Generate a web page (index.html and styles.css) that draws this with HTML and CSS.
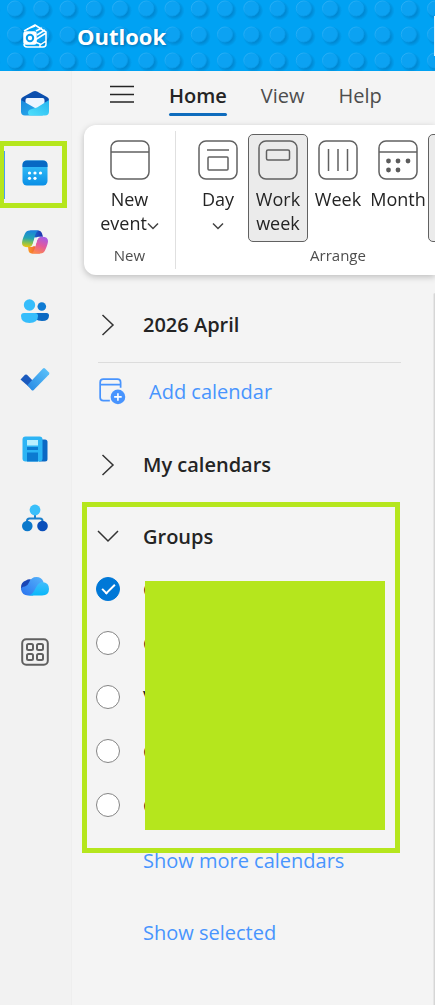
FILE: index.html
```html
<!DOCTYPE html>
<html lang="en">
<head>
  <meta charset="UTF-8">
  <meta name="viewport" content="width=device-width, initial-scale=1.0">
  <title>Calendar - Outlook</title>
  <link rel="stylesheet" href="styles.css">
</head>
<body>

<!-- Top bar -->
<header class="topbar">
  <svg class="topbar-pattern" aria-hidden="true">
    <defs>
      <linearGradient id="studEdge" x1="0" y1="0" x2="1" y2="1">
        <stop offset="0" stop-color="#35b4f7"/>
        <stop offset=".5" stop-color="#0fa2f1"/>
        <stop offset="1" stop-color="#0595e2"/>
      </linearGradient>
      <radialGradient id="studShadow">
        <stop offset=".6" stop-color="#0077bd" stop-opacity=".6"/>
        <stop offset="1" stop-color="#0077bd" stop-opacity="0"/>
      </radialGradient>
      <g id="stud">
        <circle cx="2" cy="2" r="10" fill="url(#studShadow)"/>
        <circle r="7.5" fill="#0ca2f2" stroke="url(#studEdge)"/>
      </g>
      <pattern id="studs" width="105" height="26" patternUnits="userSpaceOnUse" x="2" y="-4">
        <use href="#stud" x="13" y="12.5"/>
        <use href="#stud" x="39.3" y="12.5"/>
        <use href="#stud" x="65.5" y="12.5"/>
        <use href="#stud" x="91.8" y="12.5"/>
      </pattern>
    </defs>
    <rect width="100%" height="100%" fill="url(#studs)"/>
  </svg>
  <svg class="logo" viewBox="0 0 26 26" fill="none" stroke="#fff" stroke-width="1.5" stroke-linejoin="round" aria-hidden="true">
    <path d="M2 8 L13 2 L24 9 V21 Q24 24 21 24 H5 Q2 24 2 21 M14 8 L20 5 M15 12 L23 7 M13 17 L24 10 M13 19 L18 21 V24 M5 6 L13 3 M18 22 L24 18"/>
    <rect x="2" y="9" width="12" height="12" rx="2" fill="#fff"/>
    <circle cx="8" cy="15" r="3.2" stroke="#079bea" stroke-width="2"/>
  </svg>
  <span class="brand">Outlook</span>
  <input class="search" type="search" aria-label="Search">
</header>

<div class="app">
  <!-- App rail -->
  <nav class="rail" aria-label="Apps">
    <a href="#" class="rail-item" aria-label="Mail">
      <svg viewBox="0 0 28 28">
        <defs>
          <linearGradient id="mailL" x1="0" y1="0" x2="1" y2="1"><stop stop-color="#1b88dc"/><stop offset="1" stop-color="#2ab2ef"/></linearGradient>
          <linearGradient id="mailR" x1="0" y1="1" x2="1" y2="0"><stop stop-color="#4fe1fc"/><stop offset="1" stop-color="#27b4ef"/></linearGradient>
        </defs>
        <path d="M0 10 Q0 8 2 7 L12 1.400 Q14 .4 16 1.400 L26 7 Q28 8 28 10 V17 H0Z" fill="#0b4fae"/>
        <path d="M4.500 10 Q4.500 8 6.500 8 H21.500 Q23.500 8 23.500 10 V20 H4.500Z" fill="#edf5ff"/>
        <path d="M0 10 L14 18 L22 25.500 H4 Q0 25.500 0 21.500Z" fill="url(#mailL)"/>
        <path d="M28 10 V21.500 Q28 25.500 24 25.500 H10 Q7 25.500 7 22.500 Q7 20 10 19.200 L16 17.500Z" fill="url(#mailR)"/>
      </svg>
    </a>
    <a href="#" class="rail-item active" aria-label="Calendar" aria-current="page">
      <svg viewBox="0 0 28 28">
        <defs><linearGradient id="cal" x2="0" y2="1"><stop stop-color="#3cc7fb"/><stop offset="1" stop-color="#0a8fe6"/></linearGradient></defs>
        <rect x="1.500" y="1.500" width="25" height="25" rx="4.500" fill="url(#cal)"/>
        <path d="M1.500 8 V6 Q1.500 1.500 6 1.500 H22 Q26.500 1.500 26.500 6 V8Z" fill="#0669c4"/>
        <g fill="#fff"><circle cx="8.500" cy="14" r="1.600"/><circle cx="14" cy="14" r="1.600"/><circle cx="19.500" cy="14" r="1.600"/><circle cx="8.500" cy="19.300" r="1.600"/><circle cx="14" cy="19.300" r="1.600"/></g>
      </svg>
    </a>
    <a href="#" class="rail-item" aria-label="Copilot">
      <svg viewBox="0 0 28 28">
        <defs>
          <linearGradient id="copA" x1=".4" y1="0" x2=".3" y2="1"><stop stop-color="#1a83dd"/><stop offset=".45" stop-color="#24a5b2"/><stop offset=".75" stop-color="#8bc34b"/><stop offset="1" stop-color="#f5c50c"/></linearGradient>
          <linearGradient id="copB" x1=".7" y1="0" x2=".3" y2="1"><stop stop-color="#a55ce8"/><stop offset=".5" stop-color="#e35a9c"/><stop offset="1" stop-color="#fd8a4c"/></linearGradient>
          <linearGradient id="copC" x2="1"><stop stop-color="#177bd9"/><stop offset="1" stop-color="#2230ad"/></linearGradient>
          <linearGradient id="copD" x2="1"><stop stop-color="#fb9c25"/><stop offset="1" stop-color="#e8413d"/></linearGradient>
        </defs>
        <path d="M9 2.500 H17 Q20 2.500 21 5.500 L22 8.700 H18 Q16 8.700 15 10 L13 9Z" fill="url(#copC)"/>
        <path d="M19 25.500 H11 Q8 25.500 7.500 22.500 L7 19 H10 Q12 19 13 18 L15 19Z" fill="url(#copD)"/>
        <path d="M8.500 2.500 H18 Q15.500 3 14.400 6.500 L12 15 Q10.800 19.300 7 19.300 Q1 19.300 1 15 Q1 12 4 5.500 Q5.400 2.500 8.500 2.500Z" fill="url(#copA)"/>
        <path d="M19.500 25.500 H10.500 Q12.500 24.500 13.500 21 L16 12.500 Q17.300 8.700 21 8.700 Q27 8.700 27 13 Q27 16 24 22.500 Q22.600 25.500 19.500 25.500Z" fill="url(#copB)"/>
        <path d="M14 9.500 H17.500 Q16.500 10.500 16 12.500 L14.300 18 H11 Q11.600 17 12.200 15Z" fill="#f2f2f2"/>
      </svg>
    </a>
    <a href="#" class="rail-item" aria-label="People">
      <svg viewBox="0 0 28 28">
        <circle cx="20.800" cy="9.500" r="4.300" fill="#0f7bd3"/>
        <path d="M14 16 H25.500 Q28 16 28 18.500 Q28 24 21 24 Q17 24 14 22Z" fill="#0a69c2"/>
        <circle cx="8.500" cy="8" r="5.700" fill="#36bdfb"/>
        <path d="M3 16 H14 Q17 16 17 19 Q17 26 8.500 26 Q0 26 0 19 Q0 16 3 16Z" fill="#36bdfb"/>
      </svg>
    </a>
    <a href="#" class="rail-item" aria-label="To Do">
      <svg viewBox="0 0 28 28">
        <defs><linearGradient id="todo" x1="0" y1="1" x2="1" y2="0"><stop stop-color="#2587e3"/><stop offset="1" stop-color="#5fc5fb"/></linearGradient></defs>
        <path d="M-.5 13.500 L4 8.800 Q5 8 6 8.800 L16 19 L11.500 24Z" fill="#1b5abe"/>
        <path d="M6.500 19 L22 2.500 Q23 1.600 24 2.500 L28 6.500 Q28.800 7.500 28 8.500 L12.500 24.300 Q11.500 25 10.500 24Z" fill="url(#todo)"/>
      </svg>
    </a>
    <a href="#" class="rail-item" aria-label="Newsletters">
      <svg viewBox="0 0 28 28">
        <defs><linearGradient id="news" x2="1" y2="1"><stop stop-color="#30b4f5"/><stop offset="1" stop-color="#27b4f4"/></linearGradient></defs>
        <path d="M18 4.500 H24 Q26.500 4.500 26.500 7 V24 Q26.500 26.500 24 26.500 H18Z" fill="#0a68c4"/>
        <rect x="1.500" y="1.500" width="20" height="25" rx="3" fill="url(#news)"/>
        <rect x="6" y="5" width="11" height="5.500" fill="#b9f0ff"/>
        <path d="M6 12 H17 V15 H6Z M6 17.500 H17 V26.500 H6Z" fill="#0b7ad1"/>
      </svg>
    </a>
    <a href="#" class="rail-item" aria-label="Org Explorer">
      <svg viewBox="0 0 28 28">
        <path d="M14 10 V14.500 M6 20 V17 Q6 14.500 8.500 14.500 H19 Q21.500 14.500 21.500 17 V20" fill="none" stroke="#1b80cc" stroke-width="2"/>
        <circle cx="14" cy="6" r="5.400" fill="#39bffa"/>
        <circle cx="6.300" cy="22" r="5.300" fill="#0b78cb"/>
        <circle cx="21.500" cy="22" r="5.300" fill="#0a4fba"/>
      </svg>
    </a>
    <a href="#" class="rail-item" aria-label="OneDrive">
      <svg viewBox="0 0 28 28">
        <defs>
          <linearGradient id="odA" x1="0" y1="1" x2="1" y2="0"><stop stop-color="#2a72ee"/><stop offset="1" stop-color="#55b5fb"/></linearGradient>
          <linearGradient id="odB" x2="0" y2="1"><stop stop-color="#43bdfb"/><stop offset="1" stop-color="#09b7fa"/></linearGradient>
        </defs>
        <path d="M5 7.500 Q8 5.500 11 7 L4 20 Q0 18 0 14.500 Q0 9 5 7.500Z" fill="#1a46b5"/>
        <path d="M8 9.500 Q10 4 15.500 4 Q20.500 4 22.500 9 L12 22.500 H7 Q1 22.500 0 16 Q0 14 4 13.500 Q6.500 13 8 9.500Z" fill="url(#odA)"/>
        <path d="M7 22.500 Q11 22 13 18 L15.500 13.500 Q18 9 21.500 9 Q28 9.500 28 16 Q28 22.500 21 22.500Z" fill="url(#odB)"/>
      </svg>
    </a>
    <button class="rail-more" aria-label="More apps">
      <svg viewBox="0 0 28 28" fill="none" stroke="#606060" stroke-width="2">
        <rect x="1.200" y="1.200" width="25.600" height="25.600" rx="4"/>
        <rect x="6" y="6" width="6" height="6" rx="1.500"/><rect x="16" y="6" width="6" height="6" rx="1.500"/>
        <rect x="6" y="16" width="6" height="6" rx="1.500"/><rect x="16" y="16" width="6" height="6" rx="1.500"/>
      </svg>
    </button>
  </nav>

  <main class="main">
    <!-- Tabs -->
    <div class="tabs">
      <button class="menu-button" aria-label="Toggle pane">
        <svg viewBox="0 0 26 18" stroke="#242424" stroke-width="1.400"><path d="M1 .5 H25 M1 8.500 H25 M1 16 H25"/></svg>
      </button>
      <button class="tab selected">Home</button>
      <button class="tab">View</button>
      <button class="tab">Help</button>
    </div>

    <!-- Ribbon -->
    <div class="ribbon">
      <div class="group group-new">
        <div class="group-buttons">
          <button class="tool">
            <svg class="tool-icon" viewBox="0 0 40 40"><rect x="1" y="1" width="38" height="38" rx="7"/><path d="M1 12 H39"/></svg>
            <span class="tool-text">New<br>event<svg class="caret" viewBox="0 0 12 8"><path d="M1 1.500 L6 6.500 L11 1.500"/></svg></span>
          </button>
        </div>
        <div class="group-name">New</div>
      </div>
      <div class="group group-arrange">
        <div class="group-buttons">
          <button class="tool">
            <svg class="tool-icon" viewBox="0 0 40 40"><rect x="1" y="1" width="38" height="38" rx="7"/><path d="M9 10 H31"/><rect x="10" y="17" width="20" height="13" rx="1"/></svg>
            <span class="tool-text">Day<br><svg class="caret" viewBox="0 0 12 8"><path d="M1 1.500 L6 6.500 L11 1.500"/></svg></span>
          </button>
          <button class="tool pressed">
            <svg class="tool-icon" viewBox="0 0 40 40"><rect x="1" y="1" width="38" height="38" rx="7"/><rect x="8.500" y="10" width="23" height="10" rx="1.500"/></svg>
            <span class="tool-text">Work<br>week</span>
          </button>
          <button class="tool">
            <svg class="tool-icon" viewBox="0 0 40 40"><rect x="1" y="1" width="38" height="38" rx="7"/><path d="M10.500 9 V31 M20 9 V31 M29.500 9 V31"/></svg>
            <span class="tool-text">Week</span>
          </button>
          <button class="tool">
            <svg class="tool-icon" viewBox="0 0 40 40"><rect x="1" y="1" width="38" height="38" rx="7"/><path d="M1 12 H39"/><g fill="#5c5c5c" stroke="none"><circle cx="10.500" cy="21" r="2.400"/><circle cx="20" cy="21" r="2.400"/><circle cx="30" cy="21" r="2.400"/><circle cx="10.500" cy="30" r="2.400"/><circle cx="20" cy="30" r="2.400"/></g></svg>
            <span class="tool-text">Month</span>
          </button>
          <button class="tool pressed" aria-label="Split view"></button>
        </div>
        <div class="group-name">Arrange</div>
      </div>
    </div>

    <div class="content">
      <!-- Calendar list -->
      <aside class="pane">
        <button class="row row-month">
          <svg class="arrow" viewBox="0 0 24 24"><path d="M6.500 2 L17 12 L6.500 22"/></svg>
          2026 April
        </button>
        <hr class="divider">
        <button class="row row-add">
          <svg class="add-icon" viewBox="0 0 26 26">
            <path d="M11 22 H5 Q2 22 2 19 V5 Q2 2 5 2 H18 Q21 2 21 5 V10 M2 7 H21" fill="none" stroke="#4894fe" stroke-width="1.600"/>
            <circle cx="18.500" cy="18.500" r="6.800" fill="#4894fe"/>
            <path d="M18.500 15 V22 M15 18.500 H22" stroke="#fff" stroke-width="1.500"/>
          </svg>
          Add calendar
        </button>
        <button class="row row-mine">
          <svg class="arrow" viewBox="0 0 24 24"><path d="M6.500 2 L17 12 L6.500 22"/></svg>
          My calendars
        </button>

        <section class="groups">
          <button class="row row-groups">
            <svg class="arrow" viewBox="0 0 24 24"><path d="M2 7 L12 17 L22 7"/></svg>
            Groups
          </button>
          <div class="calendar-list">
            <label class="calendar"><input type="checkbox" checked><span>C</span></label>
            <label class="calendar"><input type="checkbox"><span>C</span></label>
            <label class="calendar"><input type="checkbox"><span>V</span></label>
            <label class="calendar"><input type="checkbox"><span>C</span></label>
            <label class="calendar"><input type="checkbox"><span>C</span></label>
            <div class="cover"></div>
          </div>
        </section>

        <a href="#" class="show-link">Show more calendars</a>
        <a href="#" class="show-link">Show selected</a>
      </aside>
      <div class="surface"></div>
    </div>
  </main>
</div>

</body>
</html>
```
FILE: styles.css
```css
*,
*::before,
*::after {
  box-sizing: border-box;
}

body {
  margin: 0;
  min-height: 100vh;
  display: flex;
  flex-direction: column;
  overflow-x: hidden;
  background-color: #f4f4f4;
  color: #242424;
  font-family: "Open Sans", "Noto Sans", sans-serif;
  font-size: 20px;
}

button {
  padding: 0;
  border: none;
  background: none;
  color: inherit;
  font: inherit;
  cursor: pointer;
}

svg {
  display: block;
  overflow: visible;
}

/* Top bar */
.topbar {
  position: relative;
  display: flex;
  align-items: center;
  height: 71px;
  padding-left: 22px;
  overflow: hidden;
  background-color: #00a2f3;
}

.topbar-pattern {
  position: absolute;
  top: 0;
  left: 0;
  width: 100%;
  height: 100%;
}

.logo {
  position: relative;
  width: 26px;
  height: 26px;
}

.brand {
  position: relative;
  margin-left: 29px;
  color: #fff;
  font-size: 22px;
  font-weight: 700;
  text-shadow: 1px 1px 3px rgba(0, 60, 110, 0.5);
}

.search {
  position: relative;
  flex: none;
  width: 40px;
  height: 40px;
  margin-left: auto;
  margin-right: -39px;
  border: none;
  background-color: #e6f4fd;
}

.app {
  display: flex;
  flex: 1;
}

/* App rail */
.rail {
  display: flex;
  flex: none;
  flex-direction: column;
  gap: 29px;
  width: 72px;
  padding-top: 13px;
  border-right: 1px solid #eee;
  background-color: #f2f2f2;
}

.rail-item,
.rail-more {
  position: relative;
  display: flex;
  align-items: center;
  justify-content: center;
  width: 70px;
  height: 40px;
}

.rail-more {
  height: 32px;
}

.rail-item svg,
.rail-more svg {
  width: 28px;
  height: 28px;
}

.rail-item.active::before {
  content: "";
  position: absolute;
  top: -2px;
  left: 4px;
  width: 1px;
  height: 48px;
  background-color: #479ef5;
}

.rail-item.active::after {
  content: "";
  position: absolute;
  top: -12px;
  left: -1px;
  width: 68px;
  height: 67px;
  border: 5px solid #b5e61d;
}

.main {
  flex: 1;
  display: flex;
  flex-direction: column;
  min-width: 0;
}

/* Tabs */
.tabs {
  display: flex;
  align-items: center;
  gap: 34px;
  height: 54px;
  padding: 0 0 6px 37px;
}

.menu-button svg {
  width: 26px;
  height: 18px;
}

.tab {
  position: relative;
  color: #4d4d4d;
}

.tab.selected {
  color: #242424;
  font-weight: 600;
}

.tab.selected::after {
  content: "";
  position: absolute;
  right: 0;
  bottom: -7px;
  left: 0;
  height: 3px;
  border-radius: 2px;
  background-color: #0f6cbd;
}

/* Ribbon */
.ribbon {
  display: flex;
  height: 150px;
  margin-left: 12px;
  padding: 6px 0;
  overflow: hidden;
  border-radius: 12px 0 0 12px;
  background-color: #fff;
  filter: drop-shadow(0 2px 3px rgba(0, 0, 0, 0.22));
}

.group {
  display: flex;
  flex: none;
  flex-direction: column;
  align-items: center;
  padding: 3px 12px 0;
}

.group-new {
  width: 92px;
  border-right: 1px solid #e0e0e0;
}

.group-buttons {
  display: flex;
}

.tool {
  display: flex;
  flex-direction: column;
  align-items: center;
  width: 60px;
  height: 108px;
  padding-top: 5px;
  border: 1px solid transparent;
  border-radius: 5px;
  font-size: 18px;
  line-height: 24px;
}

.tool.pressed {
  border-color: #616161;
  background-color: #ebebeb;
}

.tool-icon {
  flex: none;
  width: 40px;
  height: 40px;
  margin-bottom: 7px;
  fill: none;
  stroke: #616161;
  stroke-width: 1.5;
}

.tool-text {
  white-space: nowrap;
}

.caret {
  display: inline-block;
  width: 12px;
  height: 8px;
  fill: none;
  stroke: #424242;
  stroke-width: 1.5;
}

.group-name {
  margin-top: 3px;
  color: #4d4d4d;
  font-size: 15px;
  line-height: 20px;
}

/* Calendar pane */
.content {
  display: flex;
  flex: 1;
}

.pane {
  flex: 1;
  padding-top: 14px;
}

.row {
  display: flex;
  align-items: center;
  width: 100%;
  gap: 23px;
  padding: 0 0 2px 24px;
  font-weight: 600;
  text-align: left;
}

.arrow {
  flex: none;
  width: 24px;
  height: 24px;
  fill: none;
  stroke: #333;
  stroke-width: 1.5;
}

.row-month {
  height: 73px;
}

.divider {
  height: 1px;
  margin: 0 32px 0 26px;
  border: none;
  background-color: #dcdcdc;
}

.row-add {
  height: 58px;
  padding-left: 26px;
  color: #4894fe;
  font-weight: 400;
}

.add-icon {
  width: 28px;
  height: 28px;
}

.row-mine {
  height: 73px;
  margin-top: 8px;
}

.groups {
  margin: 0 33px 0 10px;
  padding: 5px 0 16px;
  border: 5px solid #b5e61d;
}

.row-groups {
  height: 50px;
  padding-left: 9px;
}

.calendar-list {
  position: relative;
}

.calendar {
  display: flex;
  align-items: center;
  gap: 23px;
  height: 54px;
  padding-left: 9px;
}

.calendar input {
  appearance: none;
  width: 24px;
  height: 24px;
  margin: 0;
  border: 1px solid #858585;
  border-radius: 50%;
  background-color: #fff;
}

.calendar input:checked {
  display: flex;
  align-items: center;
  justify-content: center;
  border-color: #0078d7;
  background-color: #0078d7;
}

.calendar input:checked::before {
  content: "";
  width: 13px;
  height: 7px;
  margin-bottom: 4px;
  border: solid #fff;
  border-width: 0 0 2px 2px;
  transform: rotate(-45deg);
}

.cover {
  position: absolute;
  top: 19px;
  right: 10px;
  bottom: 2px;
  left: 58px;
  background-color: #b5e61d;
}

.show-link {
  display: block;
  margin: 0 0 56px 71px;
  color: #4894fe;
  line-height: 16px;
  text-decoration: none;
}

.surface {
  flex: none;
  width: 2px;
  margin-top: 18px;
  border-left: 1px solid #e6e6e6;
  border-top-left-radius: 4px;
  background-color: #d6d6d6;
}
```
